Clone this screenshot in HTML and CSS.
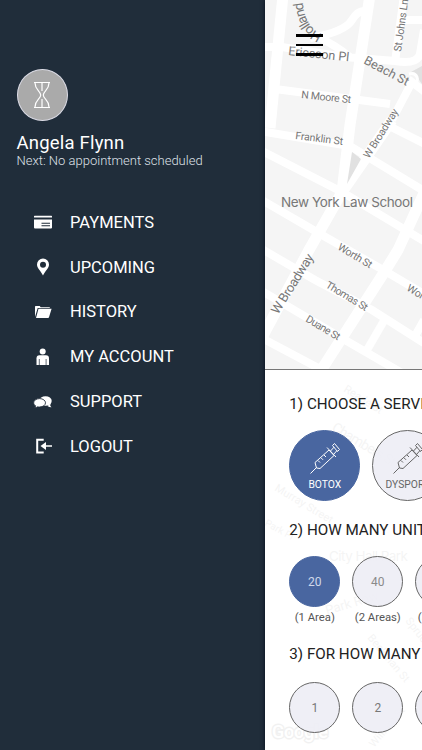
FILE: index.html
```
<!DOCTYPE html>
<html lang="en">
<head>
  <meta charset="UTF-8">
  <title>Menu</title>
  <link rel="stylesheet" href="styles.css">
</head>
<body>

  <nav class="drawer">
    <div class="profile">
      <div class="avatar">
        <svg width="20" height="28" viewBox="0 0 20 28">
          <path d="M2 1.500h16M2 26.500h16M3 2c0 7 5.700 8 5.700 12s-5.700 5-5.700 12M17 2c0 7-5.700 8-5.700 12s5.700 5 5.700 12M10 2v8M10 18v8" />
        </svg>
      </div>
      <div class="name">Angela Flynn</div>
      <div class="next">Next: No appointment scheduled</div>
    </div>

    <ul class="menu">
      <li>
        <svg viewBox="0 0 20 20"><path d="M1.600 3.700h16.800q.6 0 .6.600v1.200H1V4.300q0-.6.600-.6zM1 7.500h18v8q0 1-1 1H2q-1 0-1-1z"/><path class="cut" d="M8.500 11.200h8.500M8.500 13.700h8.500"/></svg>
        <span>PAYMENTS</span>
      </li>
      <li>
        <svg viewBox="0 0 20 20"><path fill-rule="evenodd" d="M10 1.500a6 6 0 0 0-6 6c0 4 4 6.500 6 11 2-4.500 6-7 6-11a6 6 0 0 0-6-6zm0 3.200a3 3 0 1 1 0 6 3 3 0 0 1 0-6z"/></svg>
        <span>UPCOMING</span>
      </li>
      <li>
        <svg viewBox="0 0 20 20"><path d="M2 15V4.700q0-.7.700-.7h4l1 1.200h8.600q.7 0 .7.800H4.700z"/><path d="M5.500 6.800H18.600L16 15.300q-.2.700-1 .7H3z"/></svg>
        <span>HISTORY</span>
      </li>
      <li>
        <svg viewBox="0 0 20 20"><circle cx="9.700" cy="4.500" r="3"/><path d="M6.500 8.200h6.500q3 0 3 3V18H3.500v-6.800q0-3 3-3z"/><path class="cut thin" d="M6.300 12v6.200M13.100 12v6.200"/></svg>
        <span>MY ACCOUNT</span>
      </li>
      <li>
        <svg viewBox="0 0 20 20"><path d="M18.300 10.500q-.8 2.300-1.200 2.500.3 1.300 1.400 2.200-2.500.1-3.900-1.300z"/><ellipse cx="12.500" cy="9" rx="6.200" ry="4.800"/><path class="bubble" d="M6.600 6.600c3.400 0 5.900 1.900 5.900 4.200s-2.500 4.200-5.900 4.200c-.7 0-1.300 0-1.900-.2-.9.600-2 1-3.200.9.600-.5 1-1.200 1.100-1.900C1.200 13.100.7 12 .7 10.800c0-2.300 2.500-4.200 5.900-4.200z"/></svg>
        <span>SUPPORT</span>
      </li>
      <li>
        <svg viewBox="0 0 20 20"><path d="M3.200 2.700h7.500v2H5.200v10.800h5.500v2H3.200z"/><path d="M7.500 10l5.500-4v3.200h6v1.600h-6V14z"/></svg>
        <span>LOGOUT</span>
      </li>
    </ul>
  </nav>

  <main class="content">
    <svg class="map" width="157" height="750" viewBox="265 0 157 750">
      <g class="roads">
        <path class="wide" d="M283 -5L270 128M370 -5L350 125L342 192M392 120L342 192L309 250L258 345M424 193L398 250L385 271L320 372"/>
        <path d="M260 47H282L345 57L395 61Q417 65 420 54L424 30M404 -5L395 62M404 20H425M310 38Q345 32 352 20T369 12M260 131L350 146L424 191M275 89L390 104M392 120L412 82L425 92M385 124L425 144M260 150L342 192L424 241M260 199L322 235L385 271L424 294M260 248L315 280L372 310L424 343M260 290L345 340L402 373M260 337L324 371M350 57Q335 45 320 38M424 320L415 336"/>
        <path d="M385 319L367 350"/>
      </g>
      <path class="park" d="M352 152l9 7-14 25zM422 66l-11 6 6 5 5 7z"/>
      <path class="loop" d="M409 74q6-2 8 3t-4 7"/>

      <path id="holland" d="M322.500 34Q304 28 302.500 -2" fill="none"/>
      <g class="labels">
        <text font-size="13.500"><textPath href="#holland" textLength="40">Holland</textPath></text>
        <text x="288" y="55" font-size="12.500" textLength="61" transform="rotate(6 288 55)">Ericsson Pl</text>
        <text x="363" y="63" font-size="12.500" textLength="49" transform="rotate(28 363 63)">Beach St</text>
        <text x="301" y="98" font-size="10.500" textLength="50" transform="rotate(6 301 98)">N Moore St</text>
        <text x="295" y="139" font-size="10.500" textLength="48" transform="rotate(7 295 139)">Franklin St</text>
        <text x="401" y="52" font-size="10.500" textLength="53" transform="rotate(-82 401 52)">St Johns Ln</text>
        <text x="369" y="159" font-size="10.500" textLength="56" transform="rotate(-58 369 159)">W Broadway</text>
        <text class="place" x="281" y="207" font-size="13.500" textLength="132">New York Law School</text>
        <text x="337" y="249" font-size="10.500" textLength="38" transform="rotate(31 337 249)">Worth St</text>
        <text x="278" y="315" font-size="13" textLength="68" transform="rotate(-58 278 315)">W Broadway</text>
        <text x="325" y="287" font-size="10.500" textLength="47" transform="rotate(31 325 287)">Thomas St</text>
        <text x="305" y="321" font-size="10.500" textLength="38" transform="rotate(31 305 321)">Duane St</text>
        <text x="406" y="290" font-size="10.500" textLength="40" transform="rotate(31 406 290)">Worth St</text>
        <text x="343" y="391" font-size="11" transform="rotate(32 343 391)">Reade St</text>
        <text x="331" y="430" font-size="14" textLength="72" transform="rotate(31 331 430)">Chambers St</text>
        <text x="303" y="459" font-size="11" transform="rotate(32 303 459)">Warren St</text>
        <text x="274" y="490" font-size="11" transform="rotate(31 274 490)">Murray Street</text>
        <text x="264" y="525" font-size="10" transform="rotate(29 264 525)">Park Pl</text>
        <text class="place" x="329" y="561" font-size="13.500" textLength="79">City Hall Park</text>
        <text x="327" y="615" font-size="13" transform="rotate(-17 327 615)">Park Row</text>
        <text x="405" y="621" font-size="11" transform="rotate(52 405 621)">Spruce St</text>
        <text x="367" y="638" font-size="11" transform="rotate(50 367 638)">Beekman St</text>
        <text x="374" y="748" font-size="11" transform="rotate(-50 374 748)">William St</text>
      </g>
      <text class="google" x="272" y="738" textLength="56">Google</text>
    </svg>

    <div class="hamburger">
      <span></span>
      <span></span>
      <span></span>
    </div>

    <section class="booking">
      <h2>1) CHOOSE A SERVICE</h2>
      <div class="row services">
        <div class="circle big active">
          <svg width="30" height="31" viewBox="0 0 30 31"><path d="M.5 30.500L6.500 24.500M5 19.500L19 7l5 5.500L10 25.500 6.500 25zM17 4.500l9 9.500M20.500 8L24 4.200M23.500 11.500L27 7.500M22.500 2.500L24.500.5l5 6-2 2zM8 17.500l2 2M11 14.800l2 2M14 12l2 2"/></svg>
          <span>BOTOX</span>
        </div>
        <div class="circle big">
          <svg width="30" height="31" viewBox="0 0 30 31"><path d="M.5 30.500L6.500 24.500M5 19.500L19 7l5 5.500L10 25.500 6.500 25zM17 4.500l9 9.500M20.500 8L24 4.200M23.500 11.500L27 7.500M22.500 2.500L24.500.5l5 6-2 2zM8 17.500l2 2M11 14.800l2 2M14 12l2 2"/></svg>
          <span>DYSPORT</span>
        </div>
      </div>

      <h2>2) HOW MANY UNITS?</h2>
      <div class="row">
        <div class="unit"><div class="circle active">20</div><span>(1 Area)</span></div>
        <div class="unit"><div class="circle">40</div><span>(2 Areas)</span></div>
        <div class="unit"><div class="circle">60</div><span>(3 Areas)</span></div>
      </div>

      <h2 class="people">3) FOR HOW MANY PEOPLE?</h2>
      <div class="row">
        <div class="circle count">1</div>
        <div class="circle count">2</div>
        <div class="circle count">3</div>
      </div>
    </section>
  </main>

</body>
</html>
```
FILE: styles.css
```
html, body {
  margin: 0;
  padding: 0;
  height: 750px;
  overflow: hidden;
}

body {
  display: flex;
  background: #202d3a;
  font-family: Roboto, "Liberation Sans", sans-serif;
}

.drawer {
  width: 265px;
  flex: none;
  color: #fff;
}

.profile {
  padding: 69px 0 0 16.5px;
}

.avatar {
  width: 49px;
  height: 50px;
  border: 1px solid #dcdce6;
  border-radius: 50%;
  background: #aaa;
  display: flex;
  align-items: center;
  justify-content: center;
}

.avatar svg {
  fill: none;
  stroke: #fff;
  stroke-width: 1.2;
}

.name {
  margin-top: 10px;
  font-size: 18.5px;
  line-height: 24px;
  letter-spacing: 0.2px;
}

.next {
  font-size: 13px;
  line-height: 12px;
  font-weight: 300;
  color: #dfe1e8;
}

.menu {
  list-style: none;
  margin: 33px 0 0;
  padding: 0 0 0 33px;
}

.menu li {
  display: flex;
  align-items: center;
  gap: 17px;
  height: 44.8px;
  font-size: 16.5px;
}

.menu svg {
  width: 20px;
  height: 20px;
  fill: #fff;
}

.menu .cut {
  fill: none;
  stroke: #202d3a;
  stroke-width: 1.1;
}

.menu .thin {
  stroke-width: 0.7;
}

.menu .bubble {
  stroke: #202d3a;
  stroke-width: 0.9;
}

.content {
  position: relative;
  width: 157px;
  height: 750px;
  overflow: hidden;
  background: #f5f5f5;
  box-shadow: 0 0 4px #000b1a;
}

.map {
  display: block;
}

.roads path {
  fill: none;
  stroke: #fff;
  stroke-width: 8;
}

.roads .wide {
  stroke-width: 11;
}

.park {
  fill: #e1e1e1;
}

.loop {
  fill: none;
  stroke: #fff;
  stroke-width: 3;
}

.labels text {
  fill: #777;
}

.labels .place {
  font-family: Inter, Roboto, sans-serif;
}

.google {
  font-size: 18px;
  font-weight: 500;
  fill: #fff;
  stroke: #555;
  stroke-width: 3;
  paint-order: stroke;
}

/* menu button floats over the map */
.hamburger {
  position: absolute;
  top: 34px;
  left: 31px;
  width: 27px;
  display: flex;
  flex-direction: column;
  gap: 7px;
}

.hamburger span {
  height: 2.6px;
  background: #000;
}

/* booking sheet covers the lower half of the map */
.booking {
  position: absolute;
  top: 369px;
  left: 0;
  right: 0;
  bottom: 0;
  border-top: 1px solid #777;
  padding: 25px 0 0 24.3px;
  background: rgba(255, 255, 255, 0.92);
  white-space: nowrap;
}

h2 {
  margin: 0 0 16px;
  font-size: 15.2px;
  line-height: 19px;
  font-weight: 400;
  color: #222;
}

.row {
  display: flex;
  gap: 12px;
}

.circle {
  flex: none;
  box-sizing: border-box;
  width: 51px;
  height: 51px;
  border: 1px solid #666;
  border-radius: 50%;
  background: rgba(237, 237, 245, 0.9);
  color: #8a8a8a;
  font-size: 12px;
  display: flex;
  align-items: center;
  justify-content: center;
}

.circle.active {
  background: #4966a0;
  border-color: #4966a0;
  color: #d0d8ea;
}

.circle.big {
  width: 71px;
  height: 71px;
  flex-direction: column;
  padding-top: 3px;
  font-size: 10.3px;
  color: #666;
}

.circle.big svg {
  fill: none;
  stroke: #666;
  stroke-width: 1;
  margin-bottom: 4px;
}

.circle.big.active {
  color: #fff;
}

.circle.big.active svg {
  stroke: #fff;
}

.services {
  margin-bottom: 20px;
}

.unit {
  width: 51px;
  display: flex;
  flex-direction: column;
  align-items: center;
}

.unit span {
  margin-top: 4px;
  font-size: 11.3px;
  line-height: 14px;
  color: #555;
}

.people {
  margin-top: 20px;
  margin-bottom: 18px;
}

.count {
  color: #777;
}
```
